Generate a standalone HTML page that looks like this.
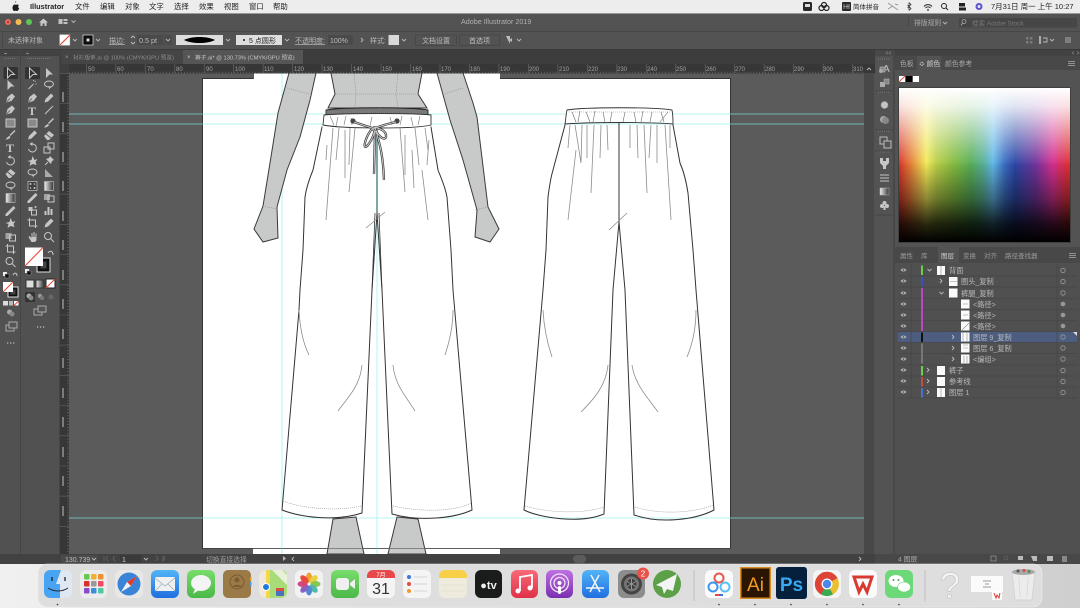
<!DOCTYPE html>
<html lang="zh"><head><meta charset="utf-8"><title>Adobe Illustrator 2019</title>
<style>
html,body{margin:0;padding:0;width:1080px;height:608px;overflow:hidden;background:#e4e4e4}
svg{display:block;position:absolute;left:0;top:0;filter:blur(.3px)}
text{font-family:"Liberation Sans","Noto Sans CJK SC",sans-serif;font-size:7.4px;fill:#bcbcbc}
.m{fill:#222}
.d{fill:#9a9a9a}
.r{font-size:6px;fill:#a0a0a0}
.l{font-size:7.2px;fill:#b8b8b8}
.ic{fill:#c6c6c6;stroke:none}
.is{fill:none;stroke:#c6c6c6;stroke-width:1}
.chev{fill:none;stroke:#bbb;stroke-width:.9}
.gar{fill:none;stroke:#333;stroke-width:1;stroke-linejoin:round;stroke-linecap:round}
.skin{fill:#c8caca;stroke:#3a3a3a;stroke-width:1}
.fold{fill:none;stroke:#8c8c8c;stroke-width:.8}
.dot{fill:none;stroke:#8a8a8a;stroke-width:.6;stroke-dasharray:1 1}
</style></head><body>
<svg width="1080" height="608" viewBox="0 0 1080 608" xmlns="http://www.w3.org/2000/svg">
<defs>
<linearGradient id="hue" x1="0" x2="1" y1="0" y2="0">
<stop offset="0" stop-color="#d8352a"/><stop offset=".07" stop-color="#e6823a"/><stop offset=".16" stop-color="#f2ea58"/><stop offset=".22" stop-color="#b8cf48"/><stop offset=".32" stop-color="#84bc40"/><stop offset=".42" stop-color="#58ae58"/><stop offset=".5" stop-color="#58b0a0"/><stop offset=".55" stop-color="#62b8e8"/><stop offset=".62" stop-color="#3a6cc0"/><stop offset=".68" stop-color="#2c46a6"/><stop offset=".8" stop-color="#74349c"/><stop offset=".9" stop-color="#d43090"/><stop offset="1" stop-color="#e0302a"/>
</linearGradient>
<linearGradient id="wh" x1="0" x2="0" y1="0" y2="1"><stop offset="0" stop-color="#fff"/><stop offset=".12" stop-color="#fff" stop-opacity=".85"/><stop offset=".5" stop-color="#fff" stop-opacity="0"/></linearGradient>
<linearGradient id="bk" x1="0" x2="0" y1="0" y2="1"><stop offset=".48" stop-color="#000" stop-opacity="0"/><stop offset=".72" stop-color="#000" stop-opacity=".42"/><stop offset=".88" stop-color="#000" stop-opacity=".82"/><stop offset="1" stop-color="#000"/></linearGradient>
<linearGradient id="desk" x1="0" x2="1" y1="0" y2="0"><stop offset="0" stop-color="#f0f0f0"/><stop offset=".5" stop-color="#dcdcdc"/><stop offset="1" stop-color="#cfcfcf"/></linearGradient>
<linearGradient id="gr" x1="0" x2="1" y1="0" y2="0"><stop offset="0" stop-color="#eee"/><stop offset="1" stop-color="#333"/></linearGradient>
<linearGradient id="bl" x1="0" x2="0" y1="0" y2="1"><stop offset="0" stop-color="#52b4f6"/><stop offset="1" stop-color="#1f6fe0"/></linearGradient>
<linearGradient id="grn" x1="0" x2="0" y1="0" y2="1"><stop offset="0" stop-color="#78dc6a"/><stop offset="1" stop-color="#4ab848"/></linearGradient>
<linearGradient id="pur" x1="0" x2="0" y1="0" y2="1"><stop offset="0" stop-color="#c070e0"/><stop offset="1" stop-color="#7a2fb0"/></linearGradient>
<linearGradient id="red" x1="0" x2="0" y1="0" y2="1"><stop offset="0" stop-color="#f86a78"/><stop offset="1" stop-color="#e03048"/></linearGradient>
<g id="arrO"><path class="is" d="M-3-5L4 1.500 0.500 1.500-3 5z"/></g>
<g id="arrF"><path class="ic" d="M-3-5L4 1.500 0.500 1.500-3 5z"/></g>
<g id="pen"><path class="ic" d="M-4.500 4.500L-3-1 1.500-4.500 4.500-1.500 1 3z"/><path d="M-4 4L-.5 .5" stroke="#535353" stroke-width=".8"/></g>
<g id="wand"><path class="is" d="M-4 4L1-1"/><path class="is" stroke-dasharray="1 1" d="M1-5V-3M3-4L2-3M4-1H2.500"/></g>
<g id="lasso"><ellipse class="is" cx="0" cy="-1" rx="4.500" ry="3"/><path class="ic" d="M-1 1L3 2 1 3 1 5z"/></g>
<g id="rect"><rect x="-4.500" y="-4" width="9" height="8" fill="#8a8a8a" stroke="#c6c6c6"/></g>
<g id="line"><path class="is" d="M-4 4L4-4"/></g>
<g id="brush"><path class="ic" d="M4-5L5-4 0 1-1 0z"/><path class="ic" d="M-1 1L0 2C-1 4-3 4.500-5 4.500-4 3.500-3 1.500-1 1z"/></g>
<g id="pencil"><path class="ic" d="M-4.500 4.500L-3.500 1 2-4.500 4.500-2-1 3.500z"/></g>
<g id="erase"><path class="ic" d="M-5 1L0-4 5 0 0 5-2 5z"/><path d="M-3-1L2 3" stroke="#535353"/></g>
<g id="rot"><path class="is" d="M-4 1A4 4 0 1 0 0-4"/><path class="ic" d="M-3-4L0-6 0-2z"/></g>
<g id="scale"><rect class="is" x="-5" y="-1" width="6" height="6"/><rect class="is" x="-1" y="-5" width="6" height="6"/></g>
<g id="star"><path class="ic" d="M-5 0L-1-1 0-5 2-1 5-2 3 1 4 4 0 3-3 5-2 1z"/></g>
<g id="pin"><path class="ic" d="M1-5L5-1 3 0 2 3-3-2 0-3z"/><path class="is" d="M-1 1L-4 4"/></g>
<g id="grid"><rect x="-4.500" y="-4.500" width="9" height="9" fill="#3e3e3e" stroke="#c6c6c6" stroke-width=".7"/><circle class="ic" cx="-2" cy="-2" r="1"/><circle class="ic" cx="2" cy="2" r="1"/><circle class="ic" cx="2" cy="-2" r=".8"/><circle class="ic" cx="-2" cy="2" r=".8"/></g>
<g id="grad"><rect x="-4.500" y="-4.500" width="9" height="9" fill="url(#gr)" stroke="#c6c6c6" stroke-width=".6"/></g>
<g id="drop"><path class="ic" d="M3-5L5-3 2 0-3 5-5 5-5 3 0-2z"/></g>
<g id="blend"><rect class="ic" x="-5" y="-4" width="6" height="6" opacity=".7"/><rect class="is" x="-1" y="-2" width="6" height="6"/></g>
<g id="sym"><path class="ic" d="M-4-4H0V0H-4z"/><rect class="is" x="-1" y="-1" width="5" height="5"/><circle class="ic" cx="3" cy="-4" r="1"/></g>
<g id="bars"><rect class="ic" x="-4.500" y="0" width="2" height="4"/><rect class="ic" x="-1.500" y="-4" width="2" height="8"/><rect class="ic" x="1.500" y="-2" width="2" height="6"/></g>
<g id="crop"><path class="is" d="M-5-3H3V5M-3-5V3H5"/></g>
<g id="hand"><path class="ic" d="M-4 0L-3-1-1 1V-4H0V0H1V-5H2V0H3V-3.500H4V2C4 4 3 5 1 5H-1z"/></g>
<g id="zoom"><circle class="is" cx="-1" cy="-1" r="3.500"/><path class="is" stroke-width="1.500" d="M1.500 1.500L5 5"/></g>
<g id="chd"><path class="chev" d="M-2-1L0 1 2-1"/></g>
<g id="chr"><path class="chev" d="M-1-2L1 0-1 2"/></g>
<g id="eye"><path d="M-3 0C-1.500-2 1.500-2 3 0 1.500 2-1.500 2-3 0z" fill="#b4b4b4"/><circle cx="0" cy="0" r=".8" fill="#444"/></g>
</defs>

<!-- desktop / menu bar -->
<rect width="1080" height="608" fill="url(#desk)"/>
<rect width="1080" height="13" fill="#ededed"/>
<path d="M15 2.500C15.800 2.500 16.300 1.800 16.200 1.200 15.500 1.300 14.900 1.900 15 2.500zM12.500 8C12.500 6 13.500 4.500 14.700 4.500 15.300 4.500 15.700 4.800 16 4.800 16.400 4.800 16.800 4.400 17.500 4.500 18 4.500 18.600 4.800 19 5.300 17.800 6 18 7.800 19.200 8.300 18.700 9.800 17.800 11 17 11 16.400 11 16.200 10.700 15.700 10.700 15.200 10.700 15 11 14.400 11 13.500 11 12.500 9.500 12.500 8z" fill="#1c1c1c"/>
<text class="m" x="30" y="9" style="font-weight:bold">Illustrator</text>
<text class="m" x="75" y="9">文件</text><text class="m" x="100" y="9">编辑</text><text class="m" x="125" y="9">对象</text><text class="m" x="149" y="9">文字</text><text class="m" x="174" y="9">选择</text><text class="m" x="199" y="9">效果</text><text class="m" x="224" y="9">视图</text><text class="m" x="249" y="9">窗口</text><text class="m" x="273" y="9">帮助</text>
<rect x="803" y="2" width="9" height="9" rx="1.500" fill="#2a2a2a"/><rect x="805" y="4" width="5" height="3" fill="#ddd"/>
<circle cx="824" cy="5" r="2.500" fill="none" stroke="#222" stroke-width="1.200"/><circle cx="821.500" cy="8" r="2.500" fill="none" stroke="#222" stroke-width="1.200"/><circle cx="826.500" cy="8" r="2.500" fill="none" stroke="#222" stroke-width="1.200"/>
<rect x="842" y="2" width="9" height="9" rx="1" fill="#2a2a2a"/><path d="M844 4V9M847 4V9M849 4V9M844 6.500H849" stroke="#ddd" stroke-width=".6"/>
<text class="m" x="853" y="9" style="font-size:6.500px">简体拼音</text>
<path d="M888 3L898 10M888 9L893 6M895 4L898 5" stroke="#999" fill="none"/>
<path d="M909 2.500L911 4.500 907.500 8M909 10.500L911 8.500 907.500 5M909 2.500V10.500" stroke="#333" fill="none" stroke-width=".8"/>
<path d="M924 6.500C926 4 930 4 932 6.500M925.500 8C927 6.500 929 6.500 930.500 8" stroke="#222" fill="none"/><circle cx="928" cy="10" r=".9" fill="#222"/>
<circle cx="944" cy="6" r="2.500" fill="none" stroke="#222"/><path d="M946 8L948 10" stroke="#222"/>
<rect x="959" y="3" width="6" height="3.500" fill="#222"/><rect x="959" y="7.500" width="7" height="3" fill="#222"/>
<circle cx="979" cy="6.500" r="3.500" fill="#5a52c8"/><circle cx="979" cy="6.500" r="1.500" fill="#e8e8ff"/>
<text class="m" x="991" y="9" style="font-size:7.500px">7月31日 周一 上午 10:27</text>

<!-- window -->
<rect x="0" y="13" width="1080" height="551" fill="#535353"/>
<rect x="0" y="13" width="1080" height="1" fill="#9a9a9a"/>
<rect x="0" y="31" width="1080" height="1" fill="#474747"/>
<rect x="0" y="49" width="1080" height="1" fill="#3a3a3a"/>
<circle cx="8" cy="22" r="3" fill="#ee6a5e"/><circle cx="8" cy="22" r="1" fill="#a23028"/><circle cx="18.500" cy="22" r="3" fill="#f4bd4f"/><circle cx="29" cy="22" r="3" fill="#5ec454"/>
<path d="M39 22.500L43.500 18.500 48 22.500H46.500V26H44.500V23.500H42.500V26H40.500V22.500z" fill="#c8c8c8"/>
<rect x="58.500" y="19" width="4" height="5" fill="#c0c0c0"/><rect x="63.500" y="19" width="4" height="2" fill="#c0c0c0"/><rect x="63.500" y="22" width="4" height="2" fill="#c0c0c0"/>
<use href="#chd" x="73.500" y="21.500"/>
<text x="461" y="24" style="font-size:7.200px;fill:#b0b0b0">Adobe Illustrator 2019</text>
<text x="914" y="25" class="d" style="font-size:6.800px;fill:#aaa">排版规则</text><use href="#chd" x="945" y="23"/>
<rect x="908" y="17" width="1" height="10" fill="#484848"/>
<rect x="959" y="18" width="118" height="9.500" fill="#464646"/>
<circle cx="964" cy="21.500" r="2" fill="none" stroke="#aaa" stroke-width=".8"/><path d="M962.500 23L961 25.500" stroke="#aaa" stroke-width=".8"/>
<text x="972" y="25.500" style="font-size:6.500px;fill:#777">搜索 Adobe Stock</text>

<!-- control bar -->
<rect x="2" y="33" width="1" height="15" fill="#474747"/>
<text x="8" y="42.500" style="font-size:7px;fill:#bbb">未选择对象</text>
<rect x="59.500" y="34.500" width="10.500" height="11" fill="#fff" stroke="#888" stroke-width=".5"/><path d="M60 45L70 35" stroke="#e8483a" stroke-width="1.200"/>
<use href="#chd" x="75" y="40"/>
<rect x="83" y="35" width="10" height="10" fill="#0c0c0c" stroke="#ccc" stroke-width=".8"/><rect x="86.500" y="38.500" width="3" height="3" fill="#ddd"/>
<use href="#chd" x="98" y="40"/>
<text x="109" y="43" style="font-size:7px;text-decoration:underline">描边:</text>
<path d="M131 38L133 36 135 38M131 42L133 44 135 42" class="chev"/>
<rect x="137" y="35" width="26" height="10" fill="#4a4a4a"/>
<text x="139" y="43" style="font-size:7.200px">0.5 pt</text>
<rect x="164" y="35" width="8" height="10" fill="#4c4c4c"/><use href="#chd" x="168" y="40"/>
<rect x="176" y="35" width="47" height="10" fill="#dcdcdc"/><path d="M184 40C192 36 207 36 215 40 207 44 192 44 184 40z" fill="#000"/>
<use href="#chd" x="228" y="40"/>
<rect x="236" y="35" width="46" height="10" fill="#dedede"/><circle cx="244" cy="40" r="1" fill="#111"/>
<text x="249" y="43" style="font-size:7px;fill:#222">5 点圆形</text>
<use href="#chd" x="287" y="40"/>
<text x="295" y="43" style="font-size:7px;text-decoration:underline">不透明度:</text>
<rect x="328" y="35" width="25" height="10" fill="#4a4a4a"/>
<text x="330" y="43" style="font-size:7px">100%</text>
<use href="#chr" x="362" y="40"/>
<text x="370" y="43" style="font-size:7px">样式:</text>
<rect x="388.500" y="35" width="10.500" height="10" fill="#d8d8d8"/>
<use href="#chd" x="404" y="40"/>
<rect x="415.500" y="35" width="41" height="10.500" fill="none" stroke="#484848"/><text x="422" y="43" style="font-size:7px">文档设置</text>
<rect x="459.500" y="35" width="40" height="10.500" fill="none" stroke="#484848"/><text x="469" y="43" style="font-size:7px">首选项</text>
<path d="M506 36H510V44M512 38V42L509 40z" fill="#bbb"/><use href="#chd" x="519" y="40"/>
<rect x="1026" y="37" width="2.500" height="2.500" fill="#7a7a7a"/><rect x="1030" y="37" width="2.500" height="2.500" fill="#7a7a7a"/><rect x="1026" y="41" width="2.500" height="2.500" fill="#7a7a7a"/><rect x="1030" y="41" width="2.500" height="2.500" fill="#7a7a7a"/>
<rect x="1039" y="36" width="2" height="8" fill="#aaa"/><path d="M1043 38H1047V42H1043" class="chev"/><use href="#chd" x="1052" y="40"/>
<path d="M1065 38H1071M1065 40H1071M1065 42H1071" stroke="#aaa"/>

<!-- tab row -->
<rect x="0" y="50" width="875" height="14" fill="#3d3d3d"/>
<rect x="61" y="50" width="122" height="14" fill="#454545"/>
<rect x="183" y="50" width="120" height="14" fill="#555"/>
<text x="65" y="59" style="font-size:6px;fill:#999">×</text>
<text x="73" y="59.500" style="font-size:5.700px;fill:#8e8e8e">衬衫版单.ai @ 100% (CMYK/GPU 预览)</text>
<text x="187" y="59" style="font-size:6px;fill:#ccc">×</text>
<text x="195" y="59.500" style="font-size:5.700px;fill:#c8c8c8">裤子.ai* @ 130.73% (CMYK/GPU 预览)</text>

<!-- canvas -->
<rect x="69" y="73" width="795" height="481" fill="#5b5b5b"/>
<rect x="254" y="73" width="246" height="6" fill="#fff"/>
<rect x="203" y="79" width="527" height="469" fill="#fff"/>
<rect x="253" y="548" width="247" height="6" fill="#fff"/>
<rect x="202" y="78" width="51" height="1" fill="#333"/><rect x="500" y="78" width="231" height="1" fill="#333"/>
<rect x="730" y="79" width="1" height="470" fill="#333"/><rect x="203" y="548" width="528" height="1" fill="#444"/>
<rect x="202" y="79" width="1" height="470" fill="#333"/>

<!-- guides -->
<g stroke="#9ef4f4" stroke-width=".8">
<path d="M69 114H864M69 124H864M69 518H864"/>
<path d="M282 73V554M377 73V554"/>
</g>
<path d="M69 114H203M69 124H203M730 114H864M730 124H864M69 518H203M730 518H864" stroke="#6fb4b4" stroke-width=".9"/>

<!-- left figure -->
<path class="skin" d="M289 73H316L310 100 300 137 287 170 277 207 278 238 263 242 254 229 263 206 270 163 278 113z"/>
<path class="skin" d="M437 73H463L473 103 477 117 488 207 499 229 490 242 475 237 477 210 463 160 450 120z"/>
<path class="skin" d="M331 73H422L418 94 427 108H328L335 94z"/>
<path class="dot" d="M335 94H418M354 73L356 94 355 108M398 73L396 94 398 108M287 88L309 94M463 88L444 94M263 206L277 209M488 207L475 210"/>
<path class="skin" d="M333 519L356 517 364 554H327z"/>
<path class="skin" d="M397 517L418 519 426 554H388z"/>
<rect x="253" y="548" width="247" height=".7" fill="#666"/>

<!-- left pants -->
<path fill="#fff" stroke="none" d="M322 127L313 170 305 197 303 250 299 310 282 510C300 517 335 522 362 513L372 290 377 213 382 290 392 514C420 522 455 518 472 510L453 290 451 250 447 197 438 170 431 127z"/>
<path class="gar" d="M322 127L313 170C308 182 306 190 305 197L303 250 300 290 299 310 282 510C300 517 335 522 362 513L372 290 377 213M377 213L382 290 392 514C420 522 455 518 472 510L453 290 451 250 447 197C445 186 441 178 438 170L431 127"/>
<path d="M377 128V213" stroke="#2a6a6a" stroke-width="1.200"/>
<path d="M375 213L372 290M379 213L382 290" stroke="#333" stroke-width=".8"/>
<path d="M366 228L385 212" stroke="#888" stroke-width=".7"/>
<path class="dot" d="M283 501C300 508 335 512 361 506M393 506C420 512 455 512 471 503"/>
<path class="fold" d="M327 145L326 160M339 128L336 160M345 130L345 178M350 128L349 165M355 128L349 192M333 128L326 220M415 128L419 165M425 128L428 150M405 135L405 175M400 128L405 192M412 150L414 188M422 170L428 220M429 140L427 165"/>
<path class="fold" d="M299 310C300 330 304 345 309 355M362 365C360 385 350 395 338 411M393 365C395 385 405 395 415 411M453 310C453 325 450 340 445 355"/>
<path d="M326 110C345 107 410 107 428 110L428 115H326z" fill="#777" stroke="#222" stroke-width=".9"/>
<path d="M324 115C345 113 415 113 431 115V125C415 129 345 129 323 125z" fill="#fff" stroke="#333" stroke-width=".9"/>
<path class="dot" d="M326 111H428M326 113H428"/>
<path d="M330 116L334 125M338 117L336 126M346 116L344 125M351 118L352 125M372 117L370 126M390 117L392 125M402 116L400 125M411 117L413 126M420 116L418 125" stroke="#777" stroke-width=".6"/>
<circle cx="353" cy="121" r="2.600" fill="#444"/><circle cx="397" cy="121" r="2.600" fill="#444"/>
<path d="M354 122L372 128C378 130 370 143 367 146 363 150 364 140 371 130 376 127 391 123 396 122M373 127C378 128 387 130 386 137 384 142 376 134 375 127M375 131L374 174M376 131C380 145 383 155 384 180" fill="none" stroke="#333" stroke-width="2.300"/>
<path d="M354 122L372 128C378 130 370 143 367 146 363 150 364 140 371 130 376 127 391 123 396 122M373 127C378 128 387 130 386 137 384 142 376 134 375 127M375 131L374 174M376 131C380 145 383 155 384 180" fill="none" stroke="#c8c8c8" stroke-width="1"/>

<!-- right pants -->
<path class="gar" d="M565 125L553 170C550 180 549 190 548 197L546 250 543 290 524 510C540 518 580 524 604 514L613 290 619 222M619 222L625 290 634 515C660 524 695 520 714 510L696 290 693 250 688 193C686 180 684 172 680 163L673 125"/>
<path d="M619 123V222" stroke="#333" stroke-width="1"/>
<path d="M609 230L627 213" stroke="#888" stroke-width=".7"/>
<path class="dot" d="M525 506C545 512 580 515 604 507M635 507C660 515 695 513 713 505"/>
<path class="fold" d="M570 125L568 148M575 125L581 163M582 125L581 163M587 125L587 158M594 125L591 193M601 125L600 158M607 125L608 150M576 150L568 220M630 125L630 148M637 125L638 158M644 125L647 193M651 125L649 158M657 125L657 163M665 125L671 220M670 125L670 148"/>
<path class="fold" d="M543 310C544 330 548 345 552 357M608 365C606 385 595 398 581 412M632 365C635 385 648 398 658 412M696 310C696 330 692 345 687 357"/>
<path d="M567 110C585 107 655 107 672 110 673 115 673 120 673 124 650 122 590 122 565 124 566 118 566 114 567 110z" fill="#fff" stroke="#333" stroke-width=".9"/>
<path class="dot" d="M569 112H670"/>
<path d="M572 112L576 122M580 111L578 122M586 112L590 122M595 111L593 122M603 112L605 122M612 112L610 122M625 112L623 122M634 112L636 122M643 111L641 122M652 112L650 122M661 112L664 122M668 112L660 122" stroke="#666" stroke-width=".6"/>

<!-- top ruler -->
<rect x="60" y="64" width="815" height="9.500" fill="#373737"/>
<path d="M69 72.500H864" stroke="#6c6c6c" stroke-width="1.400" stroke-dasharray=".7 2.250"/>
<path d="M86 68.500H864" stroke="#646464" stroke-width="9" stroke-dasharray=".7 28.770"/>
<g>
<text class="r" x="88" y="71">50</text><text class="r" x="117" y="71">60</text><text class="r" x="147" y="71">70</text><text class="r" x="176" y="71">80</text><text class="r" x="206" y="71">90</text><text class="r" x="235" y="71">100</text><text class="r" x="264" y="71">110</text><text class="r" x="294" y="71">120</text><text class="r" x="323" y="71">130</text><text class="r" x="353" y="71">140</text><text class="r" x="382" y="71">150</text><text class="r" x="412" y="71">160</text><text class="r" x="441" y="71">170</text><text class="r" x="470" y="71">180</text><text class="r" x="500" y="71">190</text><text class="r" x="529" y="71">200</text><text class="r" x="559" y="71">210</text><text class="r" x="588" y="71">220</text><text class="r" x="617" y="71">230</text><text class="r" x="647" y="71">240</text><text class="r" x="676" y="71">250</text><text class="r" x="706" y="71">260</text><text class="r" x="735" y="71">270</text><text class="r" x="765" y="71">280</text><text class="r" x="794" y="71">290</text><text class="r" x="823" y="71">300</text><text class="r" x="853" y="71">310</text>
</g>
<!-- left ruler -->
<rect x="60" y="64" width="9" height="490" fill="#373737"/>
<rect x="60" y="64" width="9" height="9.500" fill="#3f3f3f"/>
<path d="M68 73V554" stroke="#6c6c6c" stroke-width="1.400" stroke-dasharray=".7 2.250"/>
<path d="M64.500 73V554" stroke="#5c5c5c" stroke-width="9" stroke-dasharray=".7 29.500"/>
<g fill="#7c7c7c"><rect x="62" y="92" width="2" height="10"/><rect x="62" y="122" width="2" height="10"/><rect x="62" y="152" width="2" height="10"/><rect x="62" y="181" width="2" height="10"/><rect x="62" y="211" width="2" height="10"/><rect x="62" y="240" width="2" height="10"/><rect x="62" y="270" width="2" height="10"/><rect x="62" y="299" width="2" height="10"/><rect x="62" y="329" width="2" height="10"/><rect x="62" y="358" width="2" height="10"/><rect x="62" y="388" width="2" height="10"/><rect x="62" y="417" width="2" height="10"/><rect x="62" y="447" width="2" height="10"/><rect x="62" y="476" width="2" height="10"/><rect x="62" y="506" width="2" height="10"/></g>

<!-- toolbars -->
<rect x="0" y="50" width="60" height="504" fill="#454545"/>
<rect x="0" y="51" width="20" height="503" fill="#515151"/>
<rect x="21" y="51" width="38" height="503" fill="#515151"/>
<rect x="0" y="51" width="20" height="5" fill="#424242"/><rect x="21" y="51" width="38" height="5" fill="#424242"/>
<path d="M4 53.500H7M26 53.500H29" stroke="#888"/>
<path d="M4 58.500H16M27 58.500H50" stroke="#777" stroke-dasharray="1 1"/>
<rect x="3.500" y="67" width="14.500" height="12" rx="1" fill="#333"/><rect x="25" y="67" width="15" height="12" rx="1" fill="#333"/>
<!-- panel 1 tools -->
<use href="#arrO" x="10.500" y="73"/><use href="#arrF" x="10.500" y="85"/><use href="#pen" x="10.500" y="98"/><use href="#pen" x="10.500" y="110"/><use href="#rect" x="10.500" y="123"/><use href="#brush" x="10.500" y="135"/>
<text x="6" y="152" style="font:bold 12px 'Liberation Serif',serif;fill:#c6c6c6">T</text>
<use href="#rot" x="10.500" y="161"/><use href="#erase" x="10.500" y="173"/><use href="#lasso" x="10.500" y="186"/><use href="#grad" x="10.500" y="198"/><use href="#drop" x="10.500" y="211"/><use href="#star" x="10.500" y="223"/><use href="#blend" x="10.500" y="237"/><use href="#crop" x="10.500" y="249"/><use href="#zoom" x="10.500" y="262"/>
<rect x="3" y="272" width="4" height="4" fill="#eee"/><rect x="5" y="274" width="4" height="4" fill="#111" stroke="#aaa" stroke-width=".4"/>
<path d="M13 275C15 272 17 273 17 276" class="is"/>
<rect x="8" y="287" width="10" height="10" fill="#111" stroke="#ddd"/><rect x="10.500" y="289.500" width="5" height="5" fill="#444"/>
<rect x="3" y="282" width="10" height="10" fill="#fff"/><path d="M3 292L13 282" stroke="#e8483a" stroke-width="1.100"/>
<rect x="3" y="301" width="5" height="4.500" fill="#ddd"/><rect x="9" y="301" width="4" height="4.500" fill="#bbb"/><rect x="14" y="301" width="4.500" height="4.500" fill="#fff"/><path d="M14 305.500L18.500 301" stroke="#e8483a"/>
<circle cx="9.500" cy="312" r="2.500" fill="#aaa"/><circle cx="12" cy="314" r="2.500" fill="#888"/>
<rect x="6" y="325" width="8" height="6" fill="none" stroke="#aaa"/><rect x="9" y="322" width="8" height="6" fill="#555" stroke="#aaa"/>
<path d="M7 343H16" stroke="#bbb" stroke-width="1.300" stroke-dasharray="1.300 1.700"/>
<!-- panel 2 tools -->
<use href="#arrO" x="32.500" y="73"/><use href="#arrF" x="49" y="73"/>
<use href="#wand" x="32.500" y="85"/><use href="#lasso" x="49" y="85"/>
<use href="#pen" x="32.500" y="98"/><use href="#pencil" x="49" y="98"/>
<text x="28" y="115" style="font:bold 12px 'Liberation Serif',serif;fill:#c6c6c6">T</text><use href="#line" x="49" y="110"/>
<use href="#rect" x="32.500" y="123"/><use href="#brush" x="49" y="123"/>
<use href="#pencil" x="32.500" y="135"/><use href="#erase" x="49" y="135"/>
<use href="#rot" x="32.500" y="148"/><use href="#scale" x="49" y="148"/>
<use href="#star" x="32.500" y="161"/><use href="#pin" x="49" y="161"/>
<use href="#lasso" x="32.500" y="173"/><path d="M45 177V169L53 177z" fill="#aaa"/>
<use href="#grid" x="32.500" y="186"/><use href="#grad" x="49" y="186"/>
<use href="#drop" x="32.500" y="198"/><use href="#blend" x="49" y="198"/>
<use href="#sym" x="32.500" y="211"/><use href="#bars" x="49" y="211"/>
<use href="#crop" x="32.500" y="223"/><use href="#pencil" x="49" y="223"/>
<use href="#hand" x="32.500" y="237"/><use href="#zoom" x="49" y="237"/>
<rect x="37" y="258" width="13" height="14" fill="#111" stroke="#ddd"/><rect x="40" y="261" width="7" height="8" fill="#444" stroke="#111"/>
<rect x="25" y="247.500" width="18" height="18.500" fill="#fff"/><path d="M25 266L43 247.500" stroke="#e8483a" stroke-width="1.100"/>
<path d="M48 253C50 250 53 251 53 255" class="is"/>
<rect x="25" y="269" width="4" height="4" fill="#eee"/><rect x="27" y="271" width="4" height="4" fill="#111" stroke="#aaa" stroke-width=".4"/>
<rect x="26" y="280" width="8" height="8" fill="#ddd" stroke="#333"/><rect x="36" y="280" width="8" height="8" fill="url(#gr)" stroke="#333"/><rect x="46" y="279" width="9" height="9" fill="#fff" stroke="#222"/><path d="M46 288L55 279" stroke="#e8483a"/>
<rect x="25" y="292" width="10" height="10" rx="1" fill="#333"/><circle cx="29" cy="296" r="2.500" fill="#aaa"/><circle cx="31" cy="298" r="2.500" fill="#888"/>
<circle cx="40" cy="296" r="2.200" fill="#999"/><circle cx="42" cy="298" r="2.200" fill="#777"/>
<circle cx="51" cy="297" r="2.500" fill="#666"/>
<rect x="34" y="309" width="8" height="6" fill="none" stroke="#aaa"/><rect x="38" y="306" width="8" height="6" fill="#555" stroke="#aaa"/>
<path d="M37 327H46" stroke="#bbb" stroke-width="1.300" stroke-dasharray="1.300 1.700"/>

<!-- scrollbars/status -->
<rect x="864" y="73" width="10" height="481" fill="#484848"/>
<use href="#chd" x="869" y="69" transform="rotate(180 869 69)"/>
<rect x="0" y="554" width="875" height="10" fill="#424242"/>
<rect x="61" y="555" width="37" height="8" fill="#4a4a4a"/>
<text x="65" y="562" style="font-size:7px">130.739</text><use href="#chd" x="94" y="559"/>
<path d="M104 556V561M108 556L106 558.500 108 561M115 556L113 558.500 115 561" stroke="#6a6a6a" fill="none" stroke-width=".7"/>
<rect x="120" y="555" width="21" height="8" fill="#3a3a3a"/><text x="122" y="562" style="font-size:7px;fill:#ccc">1</text><use href="#chd" x="146" y="559"/>
<path d="M156 556L158 558.500 156 561M163 556L165 558.500 163 561V556" stroke="#6a6a6a" fill="none" stroke-width=".7"/>
<text x="206" y="562" style="font-size:6.800px;fill:#a0a0a0">切换直接选择</text>
<path d="M283 556L286 558.500 283 561z" fill="#bbb"/><use href="#chr" x="293" y="559" transform="rotate(180 293 559)"/>
<rect x="573" y="555" width="13" height="8" rx="4" fill="#5c5c5c"/>
<use href="#chr" x="860" y="559"/>

<!-- right icon dock -->
<rect x="875" y="50" width="205" height="514" fill="#484848"/>
<rect x="875" y="56" width="18" height="498" fill="#535353"/>
<path d="M878 59H890M878 92H890M878 131H890M878 152H890" stroke="#777" stroke-dasharray="1 1"/>
<path d="M875 91H893M875 130H893M875 151H893M875 215H893" stroke="#444"/>
<text x="883" y="72" style="font-size:10px;fill:#c6c6c6">A</text><rect x="880" y="67" width="5" height="5" fill="#888" stroke="#bbb" stroke-width=".6"/>
<circle cx="881" cy="71" r="2" fill="#aaa"/>
<rect x="880" y="82" width="5" height="5" fill="#aaa"/><rect x="884" y="79" width="5" height="5" fill="#888" stroke="#bbb" stroke-width=".5"/>
<circle cx="884.500" cy="105" r="3.500" fill="#c6c6c6" stroke="#999" stroke-dasharray="1 1"/>
<circle cx="883.500" cy="119.500" r="3.500" fill="#aaa"/><circle cx="885.500" cy="120.500" r="3.500" fill="#888"/>
<rect x="880" y="137" width="7" height="7" fill="none" stroke="#bbb"/><rect x="884" y="141" width="7" height="7" fill="#555" stroke="#bbb"/>
<path d="M880 158H883V161H886V158H889V163L886 166V169H883V166L880 163z" fill="#c6c6c6"/>
<path d="M880 175H889M880 178H889M880 181H889" stroke="#c6c6c6" stroke-width="1.100"/>
<rect x="880" y="188" width="9" height="7" fill="url(#gr)" stroke="#bbb" stroke-width=".5"/>
<circle cx="884.500" cy="203" r="2" fill="#c6c6c6"/><circle cx="882" cy="206" r="2" fill="#c6c6c6"/><circle cx="887" cy="206" r="2" fill="#c6c6c6"/><rect x="883.500" y="206" width="2" height="4" fill="#c6c6c6"/>

<!-- colour panel -->
<rect x="895" y="50" width="185" height="6" fill="#424242"/>
<path d="M1074 51.500L1072 53 1074 54.500M1077 51.500L1079 53 1077 54.500" stroke="#888" fill="none" stroke-width=".6"/>
<path d="M888 51.500L886 53 888 54.500M891 51.500L889 53 891 54.500" stroke="#888" fill="none" stroke-width=".6"/>
<rect x="895" y="56" width="185" height="14" fill="#484848"/>
<rect x="917" y="56" width="24" height="14" fill="#535353"/>
<rect x="895" y="70" width="185" height="177" fill="#535353"/>
<text x="900" y="66" style="font-size:6.800px;fill:#a8a8a8">色板</text>
<text x="919" y="66" style="font-size:6.800px;fill:#d0d0d0">≎ 颜色</text>
<text x="945" y="66" style="font-size:6.800px;fill:#a8a8a8">颜色参考</text>
<path d="M1068 61.500H1075M1068 63.500H1075M1068 65.500H1075" stroke="#aaa" stroke-width=".8"/>
<rect x="899" y="76" width="6" height="6" fill="#fff"/><path d="M899 82L905 76" stroke="#e8483a"/>
<rect x="906" y="76" width="6" height="6" fill="#000"/><rect x="913" y="76" width="6" height="6" fill="#fff"/>
<rect x="899" y="88" width="171" height="154" fill="url(#hue)"/>
<rect x="899" y="88" width="171" height="154" fill="url(#wh)"/>
<rect x="899" y="88" width="171" height="154" fill="url(#bk)"/>
<rect x="898.500" y="87.500" width="172" height="155" fill="none" stroke="#333" stroke-width=".6"/>

<!-- layers panel -->
<rect x="895" y="247" width="185" height="16" fill="#484848"/>
<rect x="938" y="247" width="21" height="16" fill="#535353"/>
<rect x="895" y="263" width="185" height="291" fill="#505050"/>
<text x="900" y="258" style="font-size:6.500px;fill:#9a9a9a">属性</text><text x="921" y="258" style="font-size:6.500px;fill:#9a9a9a">库</text><text x="941" y="258" style="font-size:6.500px;fill:#d0d0d0">图层</text><text x="963" y="258" style="font-size:6.500px;fill:#9a9a9a">变换</text><text x="984" y="258" style="font-size:6.500px;fill:#9a9a9a">对齐</text><text x="1005" y="258" style="font-size:6.500px;fill:#9a9a9a">路径查找器</text>
<path d="M1069 253.500H1076M1069 255.500H1076M1069 257.500H1076" stroke="#aaa" stroke-width=".8"/>
<rect x="898" y="331.500" width="179" height="11" fill="#4c5d80"/>
<path d="M898 276H1077M898 287H1077M898 298.500H1077M898 309.500H1077M898 320.500H1077M898 331.500H1077M898 342.500H1077M898 353.500H1077M898 365H1077M898 376H1077M898 387H1077M898 398H1077" stroke="#474747" stroke-width=".7"/>
<path d="M911 264V398M1057 264V398" stroke="#474747" stroke-width=".7"/>
<use href="#eye" x="903.500" y="270"/><use href="#eye" x="903.500" y="281"/><use href="#eye" x="903.500" y="293"/><use href="#eye" x="903.500" y="304"/><use href="#eye" x="903.500" y="315"/><use href="#eye" x="903.500" y="326"/><use href="#eye" x="903.500" y="337"/><use href="#eye" x="903.500" y="348"/><use href="#eye" x="903.500" y="359"/><use href="#eye" x="903.500" y="370"/><use href="#eye" x="903.500" y="381"/><use href="#eye" x="903.500" y="392"/>
<rect x="921" y="265.500" width="2" height="9.500" fill="#6ad04a"/>
<rect x="921" y="277" width="2" height="9.500" fill="#3b50c8"/>
<rect x="921" y="288" width="2" height="43" fill="#c045c0"/>
<rect x="921" y="332.500" width="2" height="9.500" fill="#111"/>
<rect x="921" y="343.500" width="2" height="20" fill="#777"/>
<rect x="921" y="366" width="2" height="9.500" fill="#6ad04a"/>
<rect x="921" y="377" width="2" height="9.500" fill="#c84a3a"/>
<rect x="921" y="388" width="2" height="9.500" fill="#4a70d0"/>
<g fill="#fafafa">
<rect x="937" y="266" width="8" height="9"/><rect x="949" y="277" width="8.500" height="9"/><rect x="949" y="288.500" width="8.500" height="9"/><rect x="961" y="299.500" width="8.500" height="9"/><rect x="961" y="310.500" width="8.500" height="9"/><rect x="961" y="321.500" width="8.500" height="9"/><rect x="961" y="332.500" width="8.500" height="9"/><rect x="961" y="343.500" width="8.500" height="9"/><rect x="961" y="354.500" width="8.500" height="9"/><rect x="937" y="366" width="8" height="9"/><rect x="937" y="377" width="8" height="9"/><rect x="937" y="388" width="8" height="9"/>
</g>
<path d="M950 281.500H957M963 304H968M963 315H968M962 330L969 323M963 345H968M963 348H968M963 333V341M967 333V341M964 356V363M967 356V363M941 266V275M941 388V397" stroke="#888" stroke-width=".6"/>
<use href="#chd" x="929.500" y="270"/><use href="#chr" x="941" y="281"/><use href="#chd" x="941.500" y="293"/><use href="#chr" x="953" y="337"/><use href="#chr" x="953" y="348"/><use href="#chr" x="953" y="359"/><use href="#chr" x="928" y="370"/><use href="#chr" x="928" y="381"/><use href="#chr" x="928" y="392"/>
<text class="l" x="949" y="273">背面</text><text class="l" x="961" y="284">圈头_复制</text><text class="l" x="961" y="296">裤腿_复制</text><text class="l" x="973" y="307">&lt;路径&gt;</text><text class="l" x="973" y="318">&lt;路径&gt;</text><text class="l" x="973" y="329">&lt;路径&gt;</text><text class="l" x="973" y="340">图层 9_复制</text><text class="l" x="973" y="351">图层 6_复制</text><text class="l" x="973" y="362">&lt;编组&gt;</text><text class="l" x="949" y="373">裤子</text><text class="l" x="949" y="384">参考线</text><text class="l" x="949" y="395">图层 1</text>
<g fill="none" stroke="#999" stroke-width=".8"><circle cx="1063" cy="270.500" r="2.200"/><circle cx="1063" cy="281.500" r="2.200"/><circle cx="1063" cy="293" r="2.200"/><circle cx="1063" cy="337" r="2.200"/><circle cx="1063" cy="348" r="2.200"/><circle cx="1063" cy="359" r="2.200"/><circle cx="1063" cy="370.500" r="2.200"/><circle cx="1063" cy="381.500" r="2.200"/><circle cx="1063" cy="392.500" r="2.200"/></g>
<circle cx="1063" cy="304" r="2.300" fill="#999"/><circle cx="1063" cy="315" r="2.300" fill="#999"/><circle cx="1063" cy="326" r="2.300" fill="#999"/>
<path d="M1073 332L1077 332 1077 336z" fill="#ddd"/>
<rect x="895" y="554" width="185" height="10" fill="#484848"/>
<text x="898" y="561.500" style="font-size:6.800px;fill:#aaa">4 图层</text>
<g fill="#bbb"><rect x="991" y="556" width="5" height="5" fill="none" stroke="#999" stroke-width=".7"/><circle cx="1006" cy="558" r="2" fill="none" stroke="#666" stroke-width=".7"/><rect x="1018" y="556" width="5" height="4"/><path d="M1031 556H1037V561H1033z"/><rect x="1047" y="556" width="6" height="5"/><rect x="1062" y="556" width="5" height="6" fill="#888"/></g>

<!-- dock -->
<rect x="38" y="564" width="1004" height="43" rx="9" fill="#dedede" stroke="#eee" stroke-width=".6"/>
<path d="M694 570V601M925 570V601" stroke="#bdbdbd"/>
<!-- finder -->
<rect x="44" y="570" width="28" height="28" rx="6" fill="#dfe8f2"/><path d="M50 570H61L56 584H60V598H50A6 6 0 0 1 44 592V576A6 6 0 0 1 50 570z" fill="#48a4f2"/>
<path d="M52 577V581M65 577V581" stroke="#222" stroke-width="1.300"/><path d="M48 588C54 592 62 592 68 588" stroke="#222" fill="none"/>
<!-- launchpad -->
<rect x="80" y="570" width="27" height="28" rx="6" fill="#ececec"/>
<g><rect x="84" y="574" width="5.500" height="5.500" rx="1" fill="#6cc84a"/><rect x="91" y="574" width="5.500" height="5.500" rx="1" fill="#f0b030"/><rect x="98" y="574" width="5.500" height="5.500" rx="1" fill="#f09030"/><rect x="84" y="581" width="5.500" height="5.500" rx="1" fill="#d83030"/><rect x="91" y="581" width="5.500" height="5.500" rx="1" fill="#999"/><rect x="98" y="581" width="5.500" height="5.500" rx="1" fill="#f04a60"/><rect x="84" y="588" width="5.500" height="5.500" rx="1" fill="#8a4ad0"/><rect x="91" y="588" width="5.500" height="5.500" rx="1" fill="#3a90e0"/><rect x="98" y="588" width="5.500" height="5.500" rx="1" fill="#50c8a0"/></g>
<!-- safari -->
<rect x="115" y="570" width="28" height="28" rx="6" fill="#e8e8e8"/><circle cx="129" cy="584" r="11.500" fill="#3a84d8"/><path d="M137 576L131 586 121 592 127 582z" fill="#f0f0f0"/><path d="M137 576L131 586 127 582z" fill="#e03a30"/>
<!-- mail -->
<rect x="151" y="570" width="28" height="28" rx="6" fill="url(#bl)"/><rect x="155" y="577" width="20" height="14" rx="1.500" fill="#f0f0f0"/><path d="M155 578L165 586 175 578M155 591L162 584M175 591L168 584" stroke="#9ab" fill="none" stroke-width=".7"/>
<!-- messages -->
<rect x="187" y="570" width="28" height="28" rx="6" fill="url(#grn)"/><ellipse cx="201" cy="583" rx="10" ry="8" fill="#f4f4f4"/><path d="M195 589L193 594 199 590z" fill="#f4f4f4"/>
<!-- contacts -->
<rect x="223" y="570" width="28" height="28" rx="5" fill="#9c7a48"/><circle cx="237" cy="582" r="7" fill="none" stroke="#7a5c30"/><circle cx="237" cy="580" r="2.500" fill="#7a5c30"/><path d="M232 587C234 584 240 584 242 587" fill="#7a5c30"/><rect x="250" y="577" width="1.500" height="4" fill="#e0a030"/><rect x="250" y="582" width="1.500" height="4" fill="#40a0e0"/>
<!-- maps -->
<rect x="259" y="570" width="28" height="28" rx="6" fill="#a8dc78"/><path d="M259 576A6 6 0 0 1 265 570H268V598H265A6 6 0 0 1 259 592z" fill="#f0e8d8"/><path d="M266 570H270V598H266z" fill="#f4d848"/><path d="M272 570L287 585V575L282 570z" fill="#e8f0d8"/><circle cx="266" cy="587" r="3.500" fill="#1f7ae0" stroke="#fff"/><rect x="276" y="590" width="8" height="6" rx="1" fill="#4a70c0"/><rect x="276" y="588" width="8" height="3" fill="#e04a40"/>
<!-- photos -->
<rect x="295" y="570" width="28" height="28" rx="6" fill="#f2f2f2"/>
<g transform="translate(309 584)"><ellipse cy="-6.500" rx="3" ry="5" fill="#f0a030"/><ellipse cy="-6.500" rx="3" ry="5" fill="#e8d040" transform="rotate(45)"/><ellipse cy="-6.500" rx="3" ry="5" fill="#88c850" transform="rotate(90)"/><ellipse cy="-6.500" rx="3" ry="5" fill="#50b8a8" transform="rotate(135)"/><ellipse cy="-6.500" rx="3" ry="5" fill="#5088d8" transform="rotate(180)"/><ellipse cy="-6.500" rx="3" ry="5" fill="#8a60c0" transform="rotate(225)"/><ellipse cy="-6.500" rx="3" ry="5" fill="#d04880" transform="rotate(270)"/><ellipse cy="-6.500" rx="3" ry="5" fill="#e84a40" transform="rotate(315)"/></g>
<!-- facetime -->
<rect x="331" y="570" width="28" height="28" rx="6" fill="url(#grn)"/><rect x="336" y="578" width="13" height="12" rx="3" fill="#f0f0f0"/><path d="M350 583L355 579V589L350 585z" fill="#f0f0f0"/>
<!-- calendar -->
<rect x="367" y="570" width="28" height="28" rx="6" fill="#f4f4f4"/><path d="M367 578V576A6 6 0 0 1 373 570H389A6 6 0 0 1 395 576V578z" fill="#e8484a"/>
<text x="381" y="577" text-anchor="middle" style="font-size:6px;fill:#fff">7月</text>
<text x="381" y="594" text-anchor="middle" style="font-size:16px;fill:#333">31</text>
<!-- reminders -->
<rect x="403" y="570" width="28" height="28" rx="6" fill="#f4f4f4"/><circle cx="409" cy="577" r="2" fill="#3a7ae0"/><circle cx="409" cy="584" r="2" fill="#e84a40"/><circle cx="409" cy="591" r="2" fill="#f09a30"/><path d="M414 577H427M414 584H427M414 591H427" stroke="#ccc" stroke-width=".8"/>
<!-- notes -->
<rect x="439" y="570" width="28" height="28" rx="6" fill="#eeebdc"/><path d="M439 578V576A6 6 0 0 1 445 570H461A6 6 0 0 1 467 576V578z" fill="#f8d048"/><path d="M441 585H465M441 591H465" stroke="#dcd8c8" stroke-width=".6"/>
<!-- tv -->
<rect x="475" y="570" width="27" height="28" rx="6" fill="#1a1c1c"/><text x="488.500" y="589" text-anchor="middle" style="font-size:11px;font-weight:bold;fill:#eee">●tv</text>
<!-- music -->
<rect x="511" y="570" width="27" height="28" rx="6" fill="url(#red)"/><path d="M520 591V577L532 575V588" fill="none" stroke="#fff" stroke-width="1.800"/><circle cx="518" cy="591" r="2.500" fill="#fff"/><circle cx="530" cy="588" r="2.500" fill="#fff"/>
<!-- podcasts -->
<rect x="546" y="570" width="27" height="28" rx="6" fill="url(#pur)"/><circle cx="559.500" cy="583" r="9" fill="none" stroke="#f0e0fa" stroke-width="1.300"/><circle cx="559.500" cy="583" r="5.500" fill="none" stroke="#f0e0fa" stroke-width="1.300"/><circle cx="559.500" cy="583" r="2" fill="#fff"/><rect x="558" y="586" width="3" height="8" rx="1.500" fill="#fff"/>
<!-- app store -->
<rect x="582" y="570" width="27" height="28" rx="6" fill="url(#bl)"/><path d="M599 575L590 592M591 575L600 592M586 588H604" stroke="#f4f4f4" stroke-width="1.500" fill="none"/>
<!-- sys prefs -->
<rect x="618" y="570" width="27" height="28" rx="6" fill="#8c8c8c"/><circle cx="631.500" cy="584" r="10.500" fill="#444"/><circle cx="631.500" cy="584" r="7.500" fill="#777"/><circle cx="631.500" cy="584" r="5" fill="#3c3c3c"/><path d="M631.500 579V589M627 586.500L636 581.500M627 581.500L636 586.500" stroke="#999"/>
<circle cx="643" cy="573.500" r="6" fill="#e8524a"/><text x="643" y="576.500" text-anchor="middle" style="font-size:8px;fill:#fff">2</text>
<!-- plane -->
<circle cx="667" cy="584" r="14" fill="#5ca048"/><path d="M677 574L656 585 662 587 664 594 667 589 673 591z" fill="#f4f4f4"/>
<!-- baidu -->
<rect x="705" y="570" width="28" height="28" rx="6" fill="#fbfbfb"/><circle cx="719" cy="578" r="4.500" fill="none" stroke="#e8584a" stroke-width="2"/><circle cx="713" cy="587" r="4.500" fill="none" stroke="#3a98f0" stroke-width="2"/><circle cx="725" cy="587" r="4.500" fill="none" stroke="#5ac0f8" stroke-width="2"/><rect x="715" y="594" width="4" height="2" fill="#e8484a"/><rect x="719" y="594" width="4" height="2" fill="#3a70e0"/>
<!-- ai -->
<rect x="740" y="567" width="31" height="32" fill="#d98b24"/><rect x="741.500" y="568.500" width="28" height="29" fill="#2a1500"/><text x="755.500" y="591" text-anchor="middle" style="font-size:19px;fill:#f09a28">Ai</text>
<!-- ps -->
<rect x="776" y="567" width="31" height="32" rx="3" fill="#04203c"/><text x="791.500" y="591" text-anchor="middle" style="font-size:19px;font-weight:bold;fill:#38a8f0">Ps</text>
<!-- chrome -->
<rect x="813" y="570" width="28" height="28" rx="6" fill="#f4f4f4"/><circle cx="827" cy="584" r="12" fill="#e8c030"/><path d="M827 584L816.500 578A12 12 0 0 1 837.500 578z" fill="#dc4438"/><path d="M827 584L816.500 578A12 12 0 0 0 821 594.500L827 584z" fill="#dc4438"/><path d="M827 584L821 594.400A12 12 0 0 0 833 594.400z" fill="#3aa854"/><circle cx="827" cy="584" r="5.500" fill="#fff"/><circle cx="827" cy="584" r="4.200" fill="#4a88ec"/>
<!-- wps -->
<rect x="849" y="570" width="28" height="28" rx="6" fill="#fbfbfb"/><path d="M854 577H872L867 592 863 584 859 592z" fill="none" stroke="#d83a30" stroke-width="3"/>
<!-- wechat -->
<rect x="885" y="570" width="28" height="28" rx="6" fill="#6cd878"/><ellipse cx="896" cy="581" rx="7.500" ry="6" fill="#fff"/><ellipse cx="904" cy="587" rx="6.500" ry="5" fill="#fff" stroke="#6cd878" stroke-width=".6"/><circle cx="893.500" cy="580" r="1" fill="#5a9a60"/><circle cx="898.500" cy="580" r="1" fill="#5a9a60"/>
<!-- ? -->
<text x="950" y="598" text-anchor="middle" style="font-size:36px;fill:#f4f4f4;stroke:#bbb;stroke-width:.5">?</text>
<!-- preview -->
<rect x="971" y="576" width="32" height="16" fill="#fbfbfb"/><path d="M983 581H991M985 584H989M983 587H991" stroke="#999"/>
<rect x="992" y="591" width="10" height="9" rx="1.500" fill="#fff"/><path d="M994 593L996 598 997 595 999 598 1000 593" stroke="#d83a30" fill="none"/>
<!-- trash -->
<path d="M1012 572H1035L1032 600H1015z" fill="#ececec" stroke="#d4d4d4"/><ellipse cx="1023.500" cy="572" rx="11.500" ry="3" fill="#a8a8a8"/><circle cx="1018" cy="571" r="1.500" fill="#555"/><circle cx="1024" cy="570.500" r="1.500" fill="#d05040"/><circle cx="1029" cy="571.500" r="1.500" fill="#5a8a4a"/>
<path d="M1019 577L1020 597M1028 577L1027 597" stroke="#dcdcdc"/>
<!-- dock dots -->
<g fill="#333"><circle cx="57.500" cy="604.500" r=".8"/><circle cx="719" cy="604.500" r=".8"/><circle cx="755" cy="604.500" r=".8"/><circle cx="791" cy="604.500" r=".8"/><circle cx="827" cy="604.500" r=".8"/><circle cx="863" cy="604.500" r=".8"/><circle cx="899" cy="604.500" r=".8"/></g>
</svg>
</body></html>
